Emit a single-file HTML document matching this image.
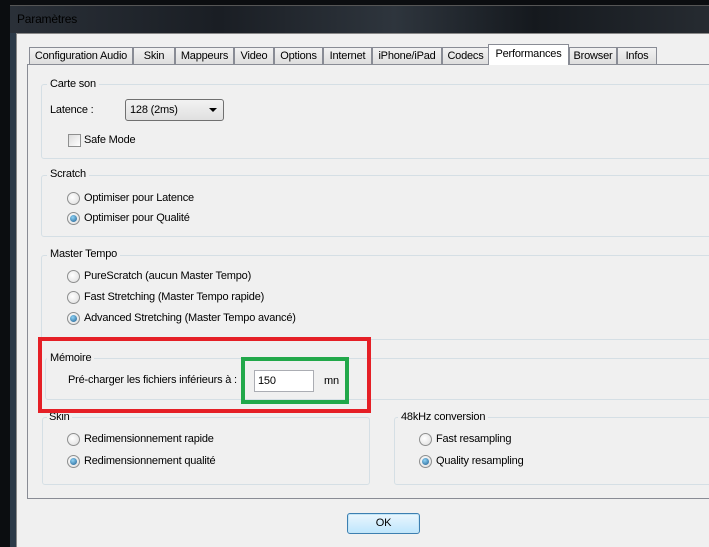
<!DOCTYPE html>
<html><head><meta charset="utf-8">
<style>
*{margin:0;padding:0;box-sizing:border-box}
body{width:709px;height:547px;overflow:hidden;background:#0b0d10;font-family:"Liberation Sans",sans-serif;font-size:11px;color:#000;position:relative;letter-spacing:-0.2px}
.a{position:absolute;white-space:nowrap}
.title{left:10px;top:5px;width:699px;height:30px;background:linear-gradient(90deg,#2a3038 0%,#1a1e24 30%,#2e353d 55%,#15191e 75%,#262b31 100%);border-top:1px solid #555;}
.frame{left:10px;top:33px;width:699px;height:514px;background:#2c3a48}
.client{left:16px;top:33px;width:693px;height:514px;background:#f0f0f0;border-left:1px solid #888;border-top:1px solid #888}
.tab{position:absolute;top:47px;height:18px;border:1px solid #898c95;border-bottom:none;background:linear-gradient(#f2f2f2,#dcdcdc);text-align:center;line-height:16px;font-size:11px}
.tab.act{top:44px;height:21px;background:#fff;z-index:3;line-height:18px}
.panel{left:27px;top:64px;width:700px;height:435px;border:1px solid #898c95;background:#f0f0f0;z-index:2}
.grp{position:absolute;border:1px solid #d5dfe5;border-radius:3px;z-index:3}
.lg{position:absolute;background:#f0f0f0;padding:0 3px;z-index:4;line-height:13px}
.rad{position:absolute;width:13px;height:13px;border-radius:50%;border:1px solid #8e8f8f;background:radial-gradient(circle at 40% 40%,#fff,#dcdcdc);z-index:4}
.rad.on::after{content:"";position:absolute;left:2px;top:2px;width:7px;height:7px;border-radius:50%;background:radial-gradient(circle at 40% 35%,#8fd3f5,#1d5c8f)}
.t{position:absolute;z-index:4;line-height:13px}
</style></head><body>
<div class="a title"></div>
<div class="a" style="left:17px;top:12px;color:#000;font-size:12px;z-index:2">Paramètres</div>
<div class="a frame"></div>
<div class="a client"></div>

<div class="tab" style="left:29px;width:104px">Configuration Audio</div>
<div class="tab" style="left:133px;width:42px">Skin</div>
<div class="tab" style="left:175px;width:59px">Mappeurs</div>
<div class="tab" style="left:234px;width:40px">Video</div>
<div class="tab" style="left:274px;width:49px">Options</div>
<div class="tab" style="left:323px;width:49px">Internet</div>
<div class="tab" style="left:372px;width:70px">iPhone/iPad</div>
<div class="tab" style="left:442px;width:47px">Codecs</div>
<div class="tab act" style="left:488px;width:81px">Performances</div>
<div class="tab" style="left:569px;width:48px">Browser</div>
<div class="tab" style="left:617px;width:40px">Infos</div>

<div class="a panel"></div>

<div class="grp" style="left:41px;top:84px;width:700px;height:75px"></div>
<div class="lg" style="left:47px;top:78px">Carte son</div>
<div class="t" style="left:50px;top:104px">Latence :</div>
<div class="a" style="left:125px;top:99px;width:99px;height:22px;border:1px solid #707070;border-radius:3px;background:linear-gradient(#f2f2f2,#e0e0e0);z-index:4"><span style="position:absolute;left:4px;top:4px">128 (2ms)</span><span style="position:absolute;right:6px;top:8px;width:0;height:0;border-left:4px solid transparent;border-right:4px solid transparent;border-top:4px solid #000"></span></div>
<div class="a" style="left:68px;top:134px;width:13px;height:13px;border:1px solid #8e8f8f;background:linear-gradient(135deg,#dcdcdc,#fff);z-index:4"></div>
<div class="t" style="left:84px;top:134px">Safe Mode</div>

<div class="grp" style="left:41px;top:175px;width:700px;height:62px"></div>
<div class="lg" style="left:47px;top:168px">Scratch</div>
<div class="rad" style="left:67px;top:192px"></div><div class="t" style="left:84px;top:192px">Optimiser pour Latence</div>
<div class="rad on" style="left:67px;top:212px"></div><div class="t" style="left:84px;top:212px">Optimiser pour Qualité</div>

<div class="grp" style="left:41px;top:255px;width:700px;height:85px"></div>
<div class="lg" style="left:47px;top:248px">Master Tempo</div>
<div class="rad" style="left:67px;top:270px"></div><div class="t" style="left:84px;top:270px">PureScratch (aucun Master Tempo)</div>
<div class="rad" style="left:67px;top:291px"></div><div class="t" style="left:84px;top:291px">Fast Stretching (Master Tempo rapide)</div>
<div class="rad on" style="left:67px;top:312px"></div><div class="t" style="left:84px;top:312px">Advanced Stretching (Master Tempo avancé)</div>

<div class="grp" style="left:45px;top:358px;width:700px;height:42px"></div>
<div class="lg" style="left:47px;top:352px">Mémoire</div>
<div class="t" style="left:68px;top:374px">Pré-charger les fichiers inférieurs à :</div>
<div class="a" style="left:254px;top:370px;width:60px;height:22px;border:1px solid #abadb3;background:#fff;z-index:4"><span style="position:absolute;left:3px;top:4px">150</span></div>
<div class="t" style="left:324px;top:375px">mn</div>

<div class="grp" style="left:42px;top:417px;width:328px;height:68px"></div>
<div class="lg" style="left:47px;top:411px;padding:0 2px 0 2px">Skin</div>
<div class="rad" style="left:67px;top:433px"></div><div class="t" style="left:84px;top:433px">Redimensionnement rapide</div>
<div class="rad on" style="left:67px;top:455px"></div><div class="t" style="left:84px;top:455px">Redimensionnement qualité</div>

<div class="grp" style="left:394px;top:417px;width:340px;height:68px"></div>
<div class="lg" style="left:398px;top:411px">48kHz conversion</div>
<div class="rad" style="left:419px;top:433px"></div><div class="t" style="left:436px;top:433px">Fast resampling</div>
<div class="rad on" style="left:419px;top:455px"></div><div class="t" style="left:436px;top:455px">Quality resampling</div>

<div class="a" style="left:38px;top:337px;width:333px;height:76px;border:4px solid #e51f26;z-index:6"></div>
<div class="a" style="left:241px;top:357px;width:108px;height:47px;border:4px solid #22a84a;z-index:6"></div>

<div class="a" style="left:347px;top:513px;width:73px;height:21px;border:1px solid #3c7fb1;border-radius:3px;background:linear-gradient(#eaf6fd,#bee6fd);text-align:center;line-height:19px;box-shadow:inset 0 0 0 1px #c4e5f6">OK</div>
</body></html>
